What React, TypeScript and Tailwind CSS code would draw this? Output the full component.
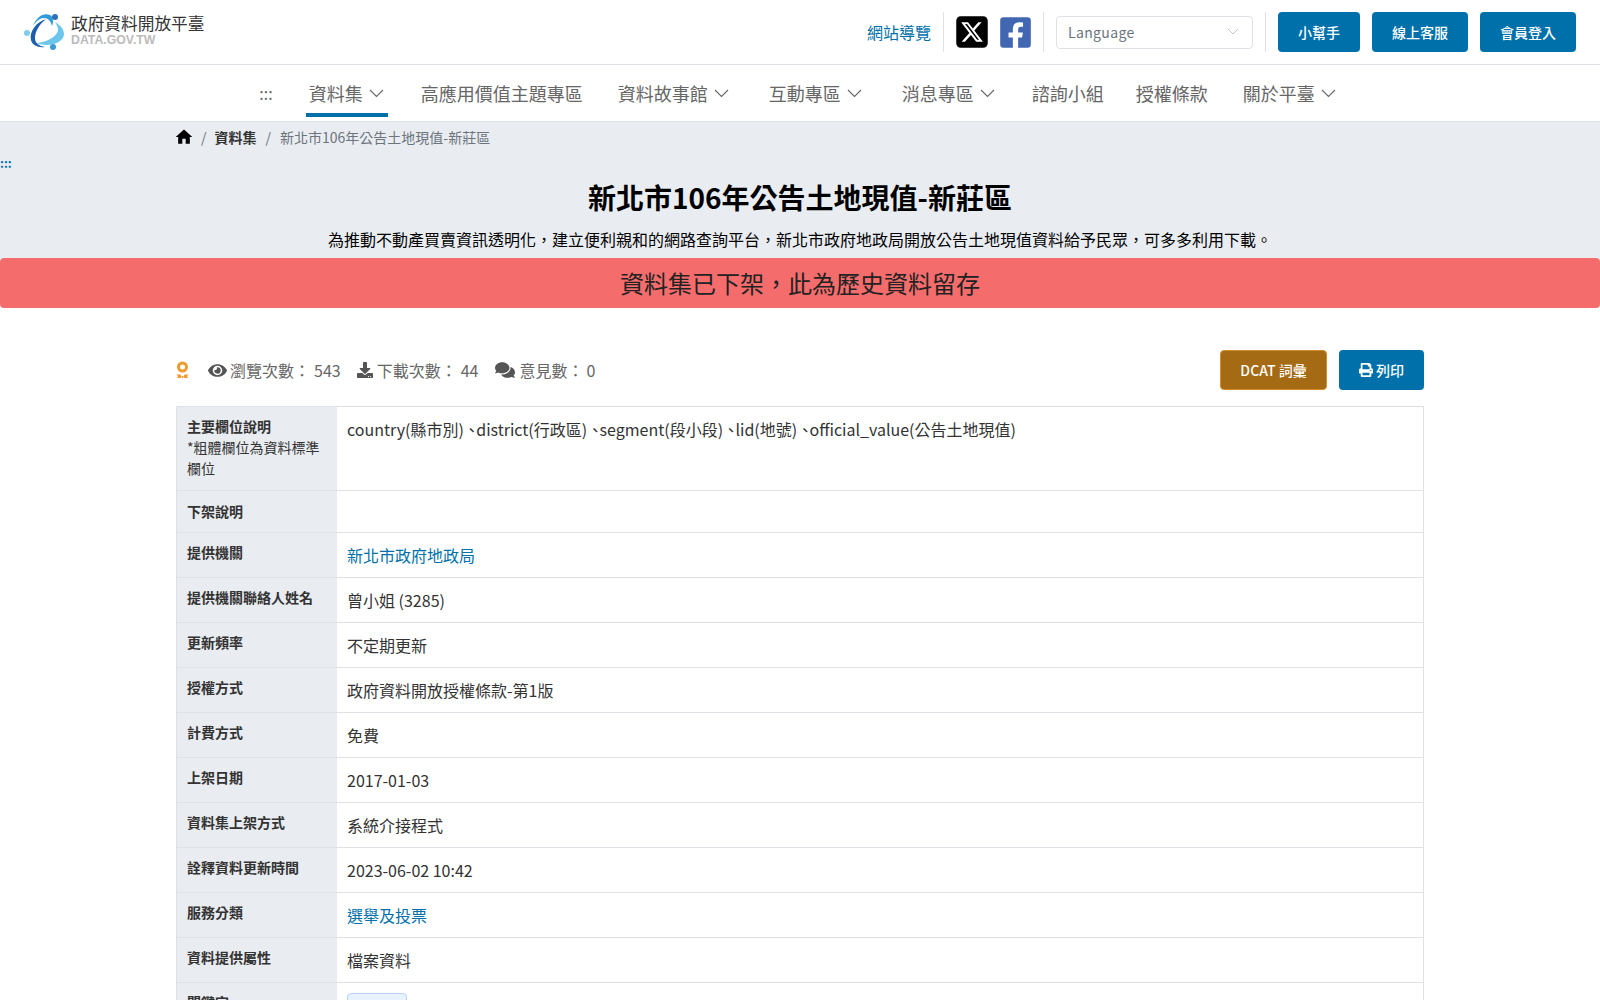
import { Fragment } from 'react';
import { FaEye, FaDownload, FaComments, FaPrint, FaFacebookSquare } from 'react-icons/fa';
import { FaSquareXTwitter } from 'react-icons/fa6';
import { MdHome } from 'react-icons/md';

const font = { fontFamily: '"Noto Sans CJK TC", "Noto Sans", sans-serif' };

const navItems = [
  { label: '資料集', caret: true, active: true, ml: 'ml-[36px]' },
  { label: '高應用價值主題專區', caret: false, ml: 'ml-[37px]' },
  { label: '資料故事館', caret: true, ml: 'ml-[35px]' },
  { label: '互動專區', caret: true, ml: 'ml-[40px]' },
  { label: '消息專區', caret: true, ml: 'ml-[40px]' },
  { label: '諮詢小組', caret: false, ml: 'ml-[37px]' },
  { label: '授權條款', caret: false, ml: 'ml-[32px]' },
  { label: '關於平臺', caret: true, ml: 'ml-[35px]' },
];

const rows = [
  { label: '下架說明', value: '', h: 'h-[42px]', pt: 'pt-[10px]' },
  { label: '提供機關', value: '新北市政府地政局', link: true, h: 'h-[45px]', pt: 'pt-[9px]' },
  { label: '提供機關聯絡人姓名', value: '曾小姐 (3285)', h: 'h-[45px]', pt: 'pt-[9px]' },
  { label: '更新頻率', value: '不定期更新', h: 'h-[45px]', pt: 'pt-[9px]' },
  { label: '授權方式', value: '政府資料開放授權條款-第1版', h: 'h-[45px]', pt: 'pt-[9px]' },
  { label: '計費方式', value: '免費', h: 'h-[45px]', pt: 'pt-[9px]' },
  { label: '上架日期', value: '2017-01-03', h: 'h-[45px]', pt: 'pt-[9px]' },
  { label: '資料集上架方式', value: '系統介接程式', h: 'h-[45px]', pt: 'pt-[9px]' },
  { label: '詮釋資料更新時間', value: '2023-06-02 10:42', h: 'h-[45px]', pt: 'pt-[9px]' },
  { label: '服務分類', value: '選舉及投票', link: true, h: 'h-[45px]', pt: 'pt-[9px]' },
  { label: '資料提供屬性', value: '檔案資料', h: 'h-[45px]', pt: 'pt-[9px]' },
];

const fields = ['country(縣市別)', 'district(行政區)', 'segment(段小段)', 'lid(地號)', 'official_value(公告土地現值)'];

function Caret({ color = '#666', w = 15 }: { color?: string; w?: number }) {
  return (
    <svg width={w} height={w * 0.6} viewBox="0 0 15 9" fill="none">
      <path d="M1 1l6.500 6.500L14 1" stroke={color} strokeWidth="1.1" />
    </svg>
  );
}

function Logo() {
  return (
    <svg width="44" height="40" viewBox="22 12 44 40">
      <path d="M37 43C48 48 64 43 64 34C64 29 60 25 55 22C58 27 59 30 57 33C54 38 46 42 37 43Z" fill="#6cc5ea" />
      <path d="M46 19C36 22 29 32 31 40C32 45 38 48 45 47C39 46 35 43 35 38C35 31 40 24 46 19Z" fill="#1d5fae" />
      <path d="M33 26C36 17 44 12 50 15C53 17 54 21 52 26C51 21 48 18 44 18C40 18 36 21 33 26Z" fill="#2f9bd8" />
      <circle cx="55" cy="17" r="3" fill="#2f6fb8" />
      <circle cx="27" cy="33" r="3" fill="#7fcdec" />
      <circle cx="53" cy="47" r="3" fill="#3c9ad6" />
    </svg>
  );
}

export default function App() {
  return (
    <div lang="zh-Hant" className="h-screen overflow-hidden bg-white text-[#333]" style={font}>
      {/* 頂部 */}
      <header className="h-[65px] border-b border-[#dee2e6] flex items-center pl-[22px] pr-[24px]">
        <Logo />
        <div className="ml-[5px] mt-[-5px]">
          <div className="text-[16.7px] leading-[20px] text-[#333]">政府資料開放平臺</div>
          <div className="text-[12.3px] leading-[13px] mt-[1px] font-bold text-[#bbb]" style={{ fontFamily: '"Liberation Sans", sans-serif' }}>DATA.GOV.TW</div>
        </div>
        <a className="ml-auto text-[16px] text-[#0070aa]">網站導覽</a>
        <div className="w-px h-[40px] bg-[#dee2e6] ml-[12px]" />
        <FaSquareXTwitter className="ml-[10px] text-[36px] text-black" />
        <FaFacebookSquare className="ml-[8px] text-[35px] text-[#4267b2]" />
        <div className="w-px h-[40px] bg-[#dee2e6] ml-[10px]" />
        <div className="ml-[12px] w-[197px] h-[33px] border border-[#dee2e6] rounded flex items-center justify-between pl-[11px] pr-[13px] text-[14px] tracking-[0.35px] text-[#6c757d]">
          Language
          <Caret color="#bbb" w={12} />
        </div>
        <div className="w-px h-[40px] bg-[#dee2e6] ml-[12px]" />
        <button className="ml-[12px] w-[82px] h-[40px] rounded bg-[#0070aa] text-white text-[14px] font-medium">小幫手</button>
        <button className="ml-[12px] w-[96px] h-[40px] rounded bg-[#0070aa] text-white text-[14px] font-medium">線上客服</button>
        <button className="ml-[12px] w-[96px] h-[40px] rounded bg-[#0070aa] text-white text-[14px] font-medium">會員登入</button>
      </header>

      {/* 主選單 */}
      <nav className="h-[56px] flex items-stretch justify-center pr-[5px]">
        <span className="self-center text-[16px] text-[#666]">:::</span>
        {navItems.map((item) => (
          <div key={item.label} className={`${item.ml} relative flex items-center gap-[6px] text-[18px] text-[#666]`}>
            {item.label}
            {item.caret && <Caret />}
            {item.active && <div className="absolute left-[-3px] right-[-4px] bottom-[4px] h-[4px] bg-[#0070aa]" />}
          </div>
        ))}
      </nav>

      {/* 標題區 */}
      <section className="h-[137px] bg-[#e9ecf1] border-t border-[#dee2e6]">
        <div className="w-[1248px] mx-auto flex items-center h-[30px] text-[14px]">
          <MdHome className="text-[20px] text-black -ml-[2px]" />
          <span className="ml-[7px] mr-[8px] text-[#6c757d]">/</span>
          <span className="font-bold text-[#333]">資料集</span>
          <span className="mx-[9px] text-[#6c757d]">/</span>
          <span className="text-[#6c757d]">新北市106年公告土地現值-新莊區</span>
        </div>
        <div className="text-[12px] leading-[12px] font-bold text-[#0070aa] mt-[5px]">:::</div>
        <h1 className="text-center text-[28px] leading-[40px] font-bold text-black mt-[8px]">新北市106年公告土地現值-新莊區</h1>
        <p className="text-center text-[16px] leading-[24px] text-black mt-[10px]">為推動不動產買賣資訊透明化，建立便利親和的網路查詢平台，新北市政府地政局開放公告土地現值資料給予民眾，可多多利用下載。</p>
      </section>

      <div className="h-[50px] bg-[#f56c6c] rounded flex items-center justify-center text-[24px] text-[#222]">資料集已下架，此為歷史資料留存</div>

      <main className="w-[1248px] mx-auto">
        {/* 統計與按鈕 */}
        <div className="mt-[42px] h-[40px] flex items-center text-[16px] text-[#666]">
          <svg width="13" height="18" viewBox="0 0 13 18" fill="none">
            <circle cx="6.500" cy="6" r="4" stroke="#ef9a2d" strokeWidth="3" />
            <path d="M0 13.500h4.500l1.500 3.500h1l1.500-3.500H13l-2 1.500 1 2H8.500L6.500 14.500 4.500 17H1l1-2z" fill="#ef9a2d" />
          </svg>
          <FaEye className="ml-[19px] text-[19px] text-[#555]" />
          <span className="ml-[3px]">瀏覽次數：<span className="ml-[4px]">543</span></span>
          <FaDownload className="ml-[16px] text-[16px] text-[#555]" />
          <span className="ml-[4px]">下載次數：<span className="ml-[4px]">44</span></span>
          <FaComments className="ml-[17px] text-[20px] text-[#555]" />
          <span className="ml-[4px]">意見數：<span className="ml-[3px]">0</span></span>
          <button className="ml-auto w-[107px] h-[40px] rounded border border-[#d18f2c] bg-[#a56a14] text-white text-[14px] font-medium">DCAT 詞彙</button>
          <button className="ml-[12px] w-[85px] h-[40px] rounded bg-[#0070aa] text-white text-[14px] font-medium flex items-center justify-center gap-[3px]">
            <FaPrint className="text-[14px]" />列印
          </button>
        </div>

        {/* 資料表 */}
        <div className="mt-[16px] border-x border-t border-[#dee2e6]">
          <div className="flex h-[84px] border-b border-[#dee2e6]">
            <div className="w-[160px] shrink-0 bg-[#e9ecf1] px-[10px] pt-[9px] text-[14px] leading-[21px] text-[#333]">
              <div className="font-bold">主要欄位說明</div>
              <div>*粗體欄位為資料標準欄位</div>
            </div>
            <div className="px-[10px] pt-[8px] text-[16px] leading-[28px] text-[#333]">
              {fields.map((f, i) => (
                <Fragment key={f}>
                  {i > 0 && <span className="tracking-[-3.600px]">、</span>}
                  {f}
                </Fragment>
              ))}
            </div>
          </div>
          {rows.map((row) => (
            <div key={row.label} className={`flex ${row.h} border-b border-[#dee2e6]`}>
              <div className={`w-[160px] shrink-0 bg-[#e9ecf1] px-[10px] ${row.pt} text-[14px] leading-[21px] font-bold text-[#333]`}>{row.label}</div>
              <div className={`px-[10px] pt-[8px] text-[16px] leading-[28px] ${row.link ? 'text-[#0070aa]' : 'text-[#333]'}`}>{row.value}</div>
            </div>
          ))}
          <div className="flex h-[60px]">
            <div className="w-[160px] shrink-0 bg-[#e9ecf1] px-[10px] pt-[9px] text-[14px] leading-[21px] font-bold text-[#333]">關鍵字</div>
            <div className="px-[10px] pt-[10px]">
              <div className="w-[60px] h-[40px] rounded border border-[#b6d4fe] bg-[#e7f1ff]" />
            </div>
          </div>
        </div>
      </main>
    </div>
  );
}
